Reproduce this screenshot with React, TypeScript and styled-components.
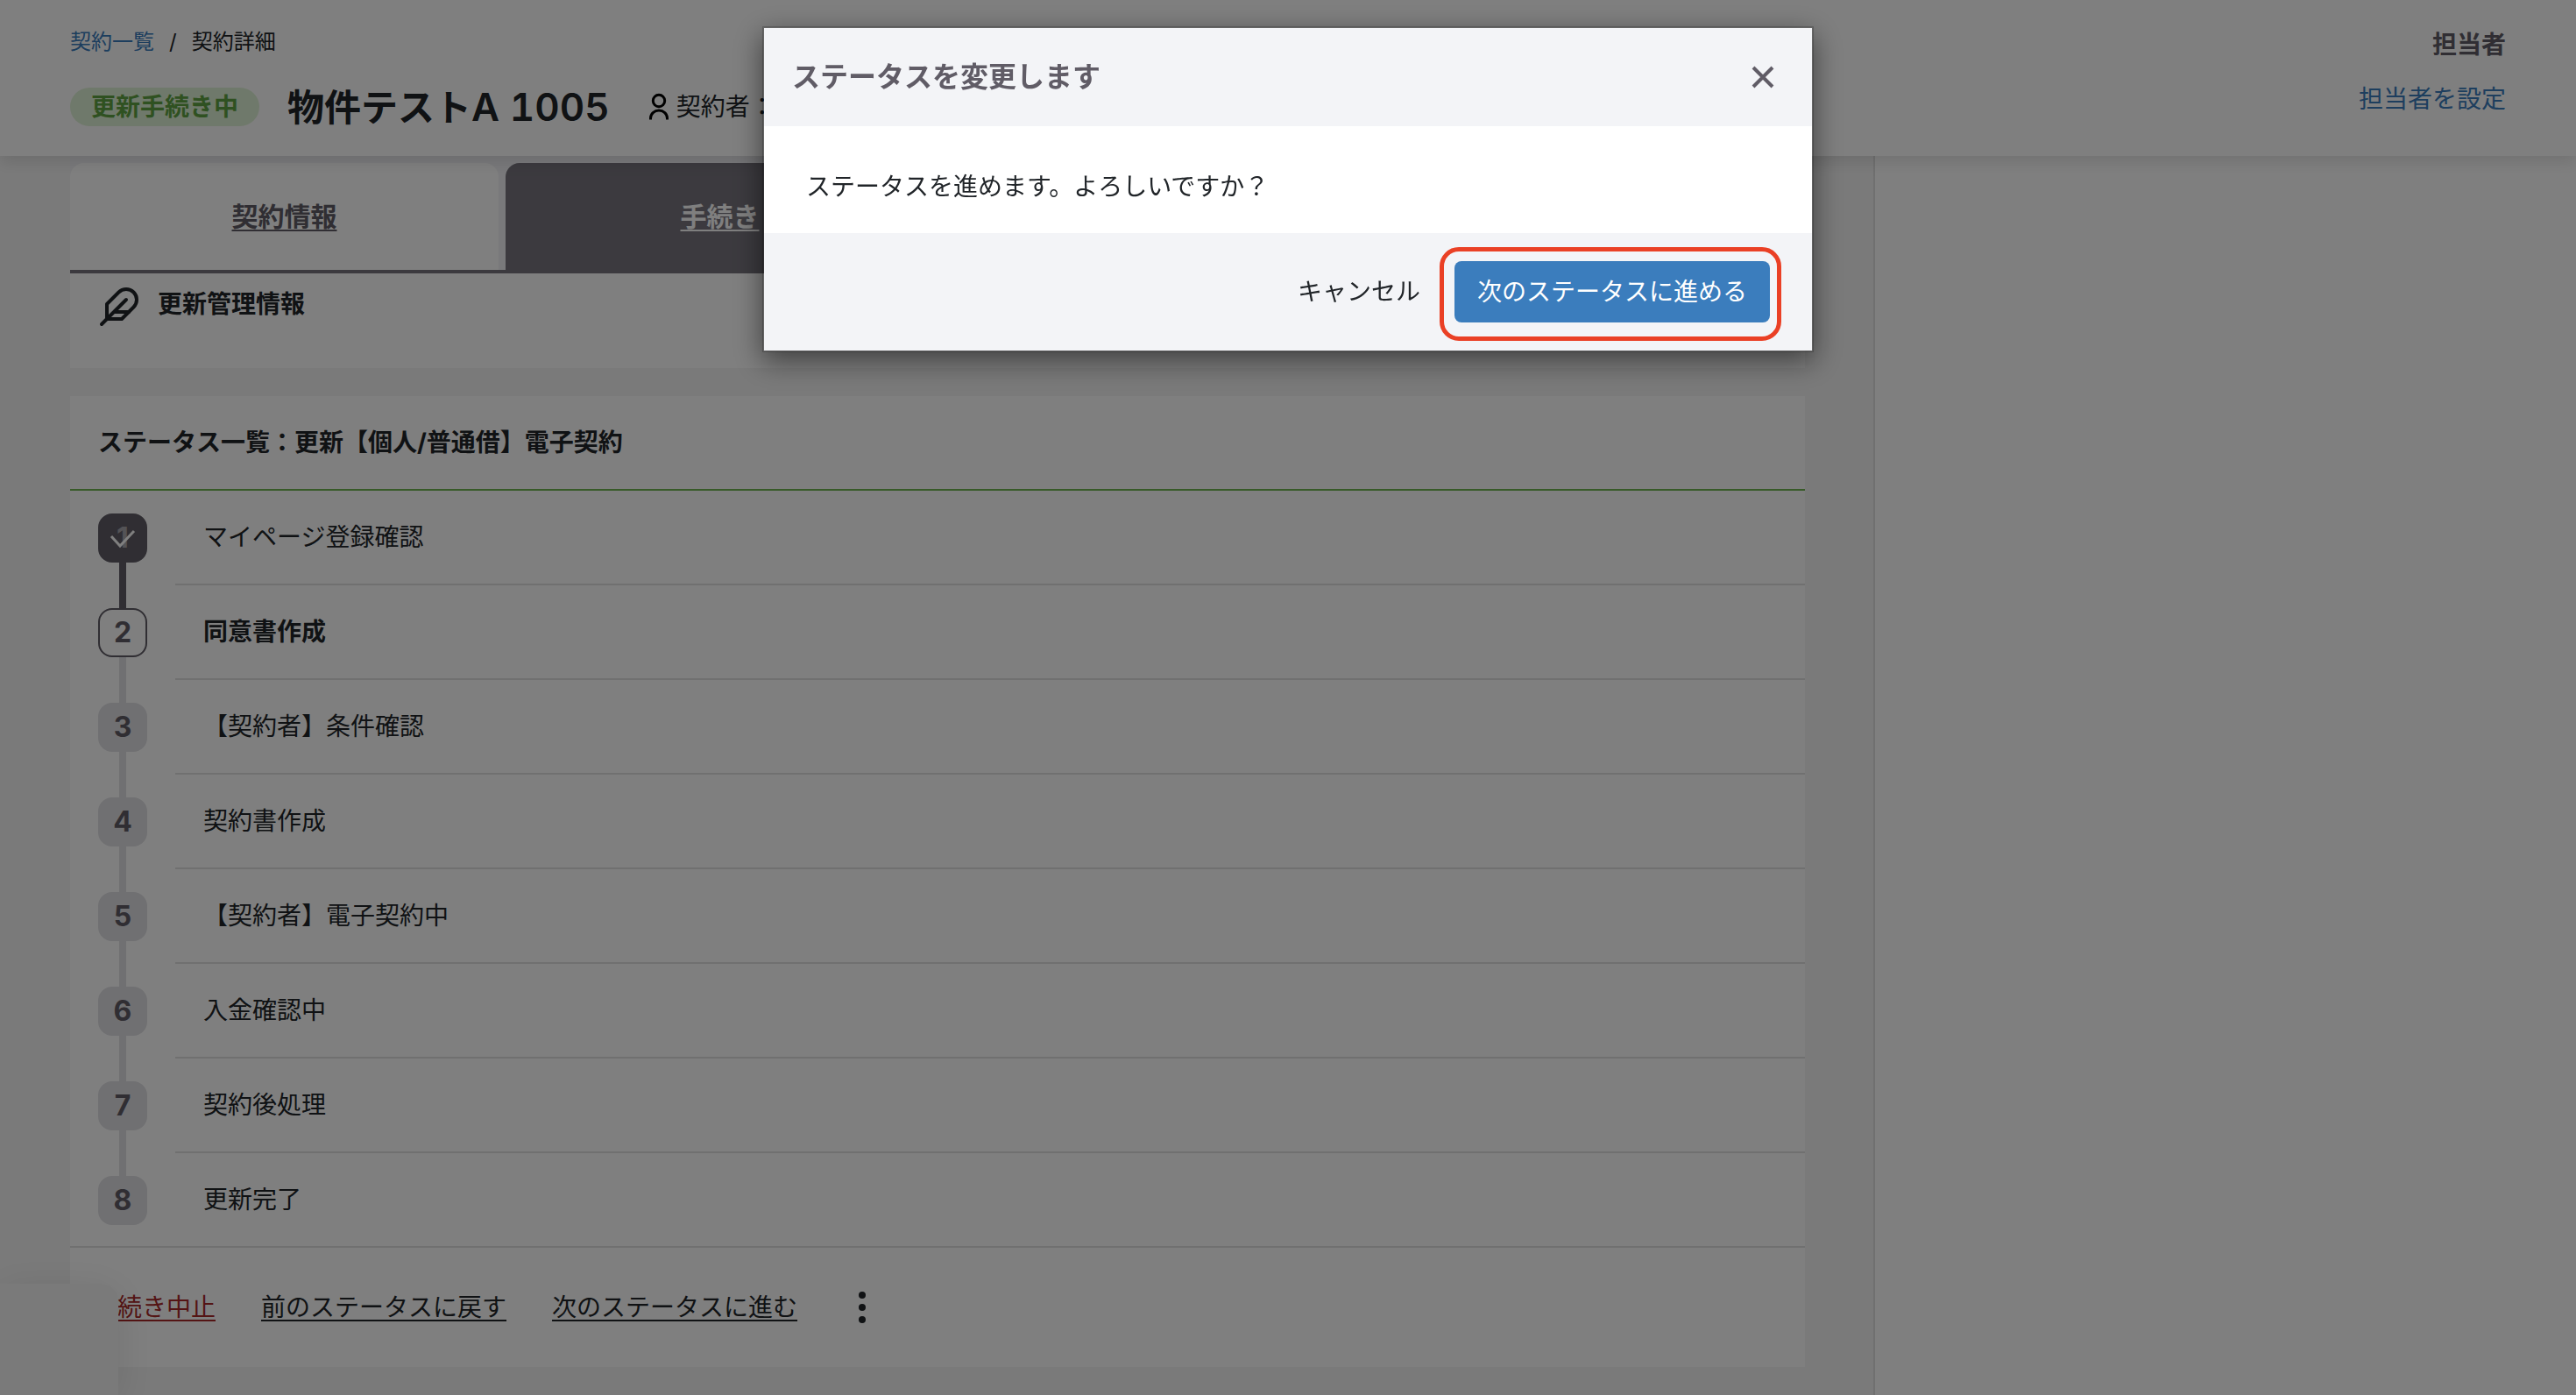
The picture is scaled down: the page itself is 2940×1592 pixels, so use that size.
import React from "react";
import styled, { createGlobalStyle, css } from "styled-components";

const color = {
  text: "#212529",
  slate: "#605c66",
  tab: "#78757e",
  blue: "#3b7dbd",
  green: "#6fb551",
  greenText: "#5fa343",
  greenSoft: "#dff2d6",
  red: "#a82828",
  line: "#e0e0e0",
  muted: "#e0e0e4",
  page: "#f5f5f5",
  modalBar: "#f3f4f7",
};

const GlobalStyle = createGlobalStyle`
  *, *::before, *::after { box-sizing: border-box; }
  body {
    margin: 0;
    background: ${color.page};
    color: ${color.text};
    font-family: Inter, "Noto Sans CJK JP", sans-serif;
    font-size: 28px;
    line-height: 42px;
  }
  button { font: inherit; color: inherit; background: none; border: 0; padding: 0; cursor: pointer; }
  h1, h2, p, ol { margin: 0; padding: 0; }
`;

const Page = styled.div`
  display: flex;
  flex-direction: column;
  min-height: 100vh;
`;

const Header = styled.header`
  position: relative;
  z-index: 1;
  display: flex;
  justify-content: space-between;
  padding: 30px 80px 26px;
  background: #fff;
  box-shadow: 0 8px 16px rgba(0, 0, 0, 0.1);
`;

const HeaderMain = styled.div`
  display: flex;
  flex-direction: column;
  gap: 26px;
`;

const Breadcrumb = styled.nav`
  display: flex;
  gap: 17px;
  font-size: 24px;
  line-height: 36px;
`;

const TextLink = styled.a`
  color: ${color.blue};
  text-decoration: none;
`;

const TitleRow = styled.div`
  display: flex;
  align-items: center;
  height: 60px;
`;

const StatusPill = styled.span`
  height: 44px;
  padding: 0 24px;
  border-radius: 22px;
  background: ${color.greenSoft};
  color: ${color.greenText};
  font-weight: 700;
  line-height: 44px;
`;

const Title = styled.h1`
  margin-left: 32px;
  font-size: 42px;
  font-weight: 600;
  line-height: 60px;
  font-variant-numeric: tabular-nums;
`;

const TitleCode = styled.span`
  font-size: 44px;
`;

const Contractor = styled.span`
  display: flex;
  align-items: center;
  gap: 8px;
  margin-left: 44px;
`;

const Assignee = styled.div`
  display: flex;
  flex-direction: column;
  align-items: flex-end;
  gap: 20px;
`;

const AssigneeLabel = styled.span`
  color: ${color.slate};
  font-weight: 700;
`;

const Body = styled.div`
  display: flex;
  flex: 1;
`;

const Main = styled.main`
  flex: 1;
  padding: 0 78px 32px 80px;
`;

const Sidebar = styled.aside`
  flex: 0 0 802px;
  border-left: 2px solid ${color.line};
  background: #fff;
`;

const Tabs = styled.nav`
  display: grid;
  grid-template-columns: repeat(4, 1fr);
  gap: 8px;
  padding-top: 8px;
  border-bottom: 4px solid ${color.tab};
  background: #f3f3f7;
`;

const Tab = styled.a<{ $active?: boolean }>`
  display: flex;
  align-items: center;
  justify-content: center;
  height: 122px;
  border-radius: 16px 16px 0 0;
  background: ${(p) => (p.$active ? color.tab : "#fff")};
  color: ${(p) => (p.$active ? "#fff" : color.slate)};
  font-size: 30px;
  font-weight: 700;
  text-decoration-thickness: 2px;
  text-underline-offset: 4px;
`;

const InfoPanel = styled.section`
  display: flex;
  align-items: flex-start;
  gap: 20px;
  padding: 14px 32px 46px;
  background: #fff;
`;

const SectionTitle = styled.h2`
  font-size: 28px;
  font-weight: 700;
  line-height: 42px;
`;

const Card = styled.section`
  margin-top: 32px;
  background: #fff;
`;

const CardHeader = styled.div`
  padding: 32px;
  border-bottom: 2px solid ${color.green};
`;

const Steps = styled.ol`
  list-style: none;
  border-bottom: 2px solid ${color.line};
`;

const Step = styled.li`
  display: flex;
  height: 108px;
  padding-left: 32px;

  &:last-child {
    height: 106px;
  }
`;

type StepState = "done" | "current" | "todo";

const StepMarker = styled.div<{ $state: StepState }>`
  display: flex;
  flex: 0 0 56px;
  flex-direction: column;
  align-items: center;

  &::before,
  &::after {
    content: "";
    width: 8px;
    background: ${(p) => (p.$state === "done" ? color.slate : color.muted)};
  }
  &::before {
    height: 26px;
    ${(p) => p.$state === "current" && css`background: ${color.slate};`}
  }
  &::after {
    flex: 1;
  }
  ${Step}:first-child &::before,
  ${Step}:last-child &::after {
    background: none;
  }
`;

const StepBadge = styled.span<{ $state: StepState }>`
  position: relative;
  display: flex;
  align-items: center;
  justify-content: center;
  width: 56px;
  height: 56px;
  border: 2px solid ${(p) => (p.$state === "todo" ? color.muted : color.slate)};
  border-radius: 16px;
  background: ${(p) => ({ done: color.slate, current: "#fff", todo: color.muted })[p.$state]};
  color: ${(p) => (p.$state === "done" ? "#a9a7ad" : color.slate)};
  font-size: 32px;
  font-weight: 700;
`;

const CheckMark = styled.svg`
  position: absolute;
  inset: 0;
  width: 52px;
  height: 52px;
`;

const StepLabel = styled.div<{ $current: boolean }>`
  display: flex;
  flex: 1;
  align-items: center;
  margin-left: 32px;
  padding-left: 32px;
  font-weight: ${(p) => (p.$current ? 700 : 400)};

  ${Step}:not(:last-child) & {
    border-bottom: 2px solid ${color.line};
  }
`;

const CardActions = styled.div`
  display: flex;
  align-items: center;
  height: 136px;
`;

const ActionLink = styled.button<{ $danger?: boolean }>`
  padding: 12px 26px;
  color: ${(p) => (p.$danger ? color.red : color.text)};
  text-decoration: underline;
  text-decoration-thickness: 2px;
  text-underline-offset: 4px;
`;

const MoreButton = styled.button`
  display: flex;
  justify-content: center;
  width: 96px;
`;

const FloatingPanel = styled.div`
  position: fixed;
  left: 0;
  bottom: 0;
  z-index: 2;
  width: 135px;
  height: 127px;
  border-top-right-radius: 20px;
  background: ${color.page};
  box-shadow: 0 8px 48px rgba(0, 0, 0, 0.1);
`;

const Backdrop = styled.div`
  position: fixed;
  inset: 0;
  z-index: 3;
  display: flex;
  align-items: flex-start;
  justify-content: center;
  padding-top: 30px;
  background: rgba(0, 0, 0, 0.5);
`;

const Dialog = styled.div`
  width: 1200px;
  border: 2px solid rgba(0, 0, 0, 0.2);
  background: #fff;
  background-clip: padding-box;
  box-shadow: 0 10px 30px rgba(0, 0, 0, 0.5);
`;

const DialogHeader = styled.div`
  display: flex;
  align-items: center;
  justify-content: space-between;
  height: 112px;
  padding: 0 32px;
  background: ${color.modalBar};
  color: ${color.slate};
`;

const DialogTitle = styled.h2`
  font-size: 32px;
  font-weight: 700;
  line-height: 48px;
`;

const CloseButton = styled.button`
  display: flex;
  align-items: center;
  justify-content: center;
  width: 48px;
  height: 48px;
`;

const DialogBody = styled.p`
  padding: 48px 48px 32px;
`;

const DialogFooter = styled.div`
  display: flex;
  align-items: center;
  justify-content: flex-end;
  gap: 13px;
  padding: 32px 48px;
  background: ${color.modalBar};
`;

const DialogButton = styled.button<{ $primary?: boolean }>`
  position: relative;
  padding: 14px 26px;
  border-radius: 8px;
  ${(p) => p.$primary && css`
    background: ${color.blue};
    color: #fff;
  `}
`;

const Highlight = styled.span`
  position: absolute;
  inset: -16px -13px -21px -17px;
  border: 5px solid #ea4025;
  border-radius: 22px;
  pointer-events: none;
`;

const steps: { label: string; state: StepState }[] = [
  { label: "マイページ登録確認", state: "done" },
  { label: "同意書作成", state: "current" },
  { label: "【契約者】条件確認", state: "todo" },
  { label: "契約書作成", state: "todo" },
  { label: "【契約者】電子契約中", state: "todo" },
  { label: "入金確認中", state: "todo" },
  { label: "契約後処理", state: "todo" },
  { label: "更新完了", state: "todo" },
];

const PersonIcon = () => (
  <svg width="24" height="32" viewBox="0 0 24 32" fill="none" stroke="#000" strokeWidth="3" aria-hidden="true">
    <circle cx="12" cy="9" r="6.7" />
    <path d="M2.5 30.5v-1.5a9.5 9 0 0 1 19 0v1.5" />
  </svg>
);

const FeatherIcon = () => (
  <svg width="48" height="48" viewBox="0 0 24 24" fill="none" stroke="currentColor" strokeWidth="2" strokeLinecap="round" strokeLinejoin="round" aria-hidden="true">
    <path d="M20.24 12.24a6 6 0 0 0-8.49-8.49L5 10.5V19h8.5z" />
    <path d="M16 8 2 22M17.5 15H9" />
  </svg>
);

export default function App() {
  return (
    <>
      <GlobalStyle />
      <Page>
        <Header>
          <HeaderMain>
            <Breadcrumb>
              <TextLink href="#contracts">契約一覧</TextLink>
              <span>/</span>
              <span>契約詳細</span>
            </Breadcrumb>
            <TitleRow>
              <StatusPill>更新手続き中</StatusPill>
              <Title>
                物件テスト<TitleCode>A 1005</TitleCode>
              </Title>
              <Contractor>
                <PersonIcon />
                契約者：
              </Contractor>
            </TitleRow>
          </HeaderMain>
          <Assignee>
            <AssigneeLabel>担当者</AssigneeLabel>
            <TextLink href="#assignee">担当者を設定</TextLink>
          </Assignee>
        </Header>

        <Body>
          <Main>
            <Tabs>
              <Tab href="#info">契約情報</Tab>
              <Tab href="#procedure" $active>手続き</Tab>
            </Tabs>
            <InfoPanel>
              <FeatherIcon />
              <SectionTitle>更新管理情報</SectionTitle>
            </InfoPanel>

            <Card>
              <CardHeader>
                <SectionTitle>ステータス一覧：更新【個人/普通借】電子契約</SectionTitle>
              </CardHeader>
              <Steps>
                {steps.map(({ label, state }, i) => (
                  <Step key={label}>
                    <StepMarker $state={state}>
                      <StepBadge $state={state}>
                        {i + 1}
                        {state === "done" && (
                          <CheckMark viewBox="0 0 52 52" fill="none" stroke="#fff" strokeWidth="3" aria-hidden="true">
                            <path d="M13 24l10 11 16-17" />
                          </CheckMark>
                        )}
                      </StepBadge>
                    </StepMarker>
                    <StepLabel $current={state === "current"}>{label}</StepLabel>
                  </Step>
                ))}
              </Steps>
              <CardActions>
                <ActionLink type="button" $danger>手続き中止</ActionLink>
                <ActionLink type="button">前のステータスに戻す</ActionLink>
                <ActionLink type="button">次のステータスに進む</ActionLink>
                <MoreButton type="button" aria-label="その他">
                  <svg width="8" height="36" viewBox="0 0 8 36" fill="currentColor" aria-hidden="true">
                    <circle cx="4" cy="4" r="4" />
                    <circle cx="4" cy="18" r="4" />
                    <circle cx="4" cy="32" r="4" />
                  </svg>
                </MoreButton>
              </CardActions>
            </Card>
          </Main>
          <Sidebar />
        </Body>
      </Page>

      <FloatingPanel />

      <Backdrop>
        <Dialog role="dialog" aria-modal="true" aria-labelledby="dialog-title">
          <DialogHeader>
            <DialogTitle id="dialog-title">ステータスを変更します</DialogTitle>
            <CloseButton type="button" aria-label="閉じる">
              <svg width="26" height="26" viewBox="0 0 26 26" stroke="currentColor" strokeWidth="4" aria-hidden="true">
                <path d="M2 2l22 22M24 2L2 24" />
              </svg>
            </CloseButton>
          </DialogHeader>
          <DialogBody>ステータスを進めます。よろしいですか？</DialogBody>
          <DialogFooter>
            <DialogButton type="button">キャンセル</DialogButton>
            <DialogButton type="button" $primary>
              次のステータスに進める
              <Highlight />
            </DialogButton>
          </DialogFooter>
        </Dialog>
      </Backdrop>
    </>
  );
}
